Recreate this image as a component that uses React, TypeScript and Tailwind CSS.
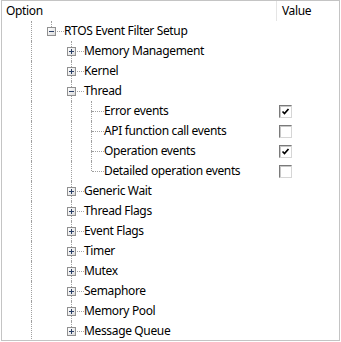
type Row = {
  label: string;
  level: number;
  last: boolean;
  cont: boolean[];
  box?: "plus" | "minus";
  checked?: boolean;
};

const L2 = [true, false];
const L3 = [true, false, true];

const ROWS: Row[] = [
  { label: "RTOS Event Filter Setup", level: 1, last: true, cont: [true], box: "minus" },
  { label: "Memory Management", level: 2, last: false, cont: L2, box: "plus" },
  { label: "Kernel", level: 2, last: false, cont: L2, box: "plus" },
  { label: "Thread", level: 2, last: false, cont: L2, box: "minus" },
  { label: "Error events", level: 3, last: false, cont: L3, checked: true },
  { label: "API function call events", level: 3, last: false, cont: L3, checked: false },
  { label: "Operation events", level: 3, last: false, cont: L3, checked: true },
  { label: "Detailed operation events", level: 3, last: true, cont: L3, checked: false },
  { label: "Generic Wait", level: 2, last: false, cont: L2, box: "plus" },
  { label: "Thread Flags", level: 2, last: false, cont: L2, box: "plus" },
  { label: "Event Flags", level: 2, last: false, cont: L2, box: "plus" },
  { label: "Timer", level: 2, last: false, cont: L2, box: "plus" },
  { label: "Mutex", level: 2, last: false, cont: L2, box: "plus" },
  { label: "Semaphore", level: 2, last: false, cont: L2, box: "plus" },
  { label: "Memory Pool", level: 2, last: false, cont: L2, box: "plus" },
  { label: "Message Queue", level: 2, last: true, cont: L2, box: "plus" },
];

const DOT = "border-dotted border-[#a0a0a0]";

// one 20px indent cell, with the sibling line of an ancestor when it goes on
function Guide({ on }: { on: boolean }) {
  return (
    <div className="h-5 w-5 shrink-0">
      {on && <div className={`h-5 w-[11px] border-r ${DOT}`} />}
    </div>
  );
}

function ExpandBox({ kind }: { kind: "plus" | "minus" }) {
  return (
    <div className="absolute left-[6px] top-[6px] flex h-[9px] w-[9px] items-center justify-center border border-[#919191] bg-gradient-to-br from-white to-[#dcdcdc]">
      <svg width="7" height="7" viewBox="0 0 7 7" className="block">
        <rect x="1" y="3" width="5" height="1" fill="#2a3f66" />
        {kind === "plus" && <rect x="3" y="1" width="1" height="5" fill="#2a3f66" />}
      </svg>
    </div>
  );
}

// the node's own connector: line up (and down unless last), stub to the label
function Connector({ last, box }: { last: boolean; box?: "plus" | "minus" }) {
  return (
    <div className="relative flex h-5 w-[23px] shrink-0 flex-col">
      <div className="flex h-[10px]">
        <div className={`w-[11px] border-r ${DOT}`} />
      </div>
      <div className="flex h-[10px]">
        <div className={`w-[11px] ${last ? "" : `border-r ${DOT}`}`} />
        <div className={`flex-1 border-t ${DOT}`} />
      </div>
      {box && <ExpandBox kind={box} />}
    </div>
  );
}

function CheckBox({ checked }: { checked: boolean }) {
  return (
    <div className="ml-[3px] h-[13px] w-[13px] border border-t-[#7a7a7a] border-l-[#7a7a7a] border-r-[#d6d6d6] border-b-[#d6d6d6] bg-white shadow-[inset_1px_1px_0_#c8c8c8]">
      {checked && (
        <svg width="11" height="11" viewBox="0 0 11 11" className="block">
          <path d="M2.5 5.5 L4.5 7.5 L8.5 3" fill="none" stroke="#000" strokeWidth="1.7" />
        </svg>
      )}
    </div>
  );
}

function TreeRow({ row }: { row: Row }) {
  return (
    <div className="flex h-5 items-center">
      <div className="flex h-5 w-[274px] shrink-0 items-center overflow-hidden pl-[19px]">
        {row.cont.map((c, k) => (
          <Guide key={k} on={c} />
        ))}
        <Connector last={row.last} box={row.box} />
        <span className="whitespace-nowrap tracking-[-0.35px]">{row.label}</span>
      </div>
      <div className="flex-1">{row.checked !== undefined && <CheckBox checked={row.checked} />}</div>
    </div>
  );
}

export default function App() {
  return (
    <div className="ml-px h-[341px] w-[339px] overflow-hidden border border-[#c4c4c4] bg-white font-['Noto_Sans',sans-serif] text-[12px] leading-5 text-black">
      <div className="flex h-5 tracking-[-0.35px]">
        <div className="w-[274px] shrink-0 pl-1">Option</div>
        <div className="border-l border-[#e5e5e5] pl-[5px]">Value</div>
      </div>
      <div className="flex flex-col">
        {ROWS.map((r) => (
          <TreeRow key={r.label} row={r} />
        ))}
      </div>
    </div>
  );
}
